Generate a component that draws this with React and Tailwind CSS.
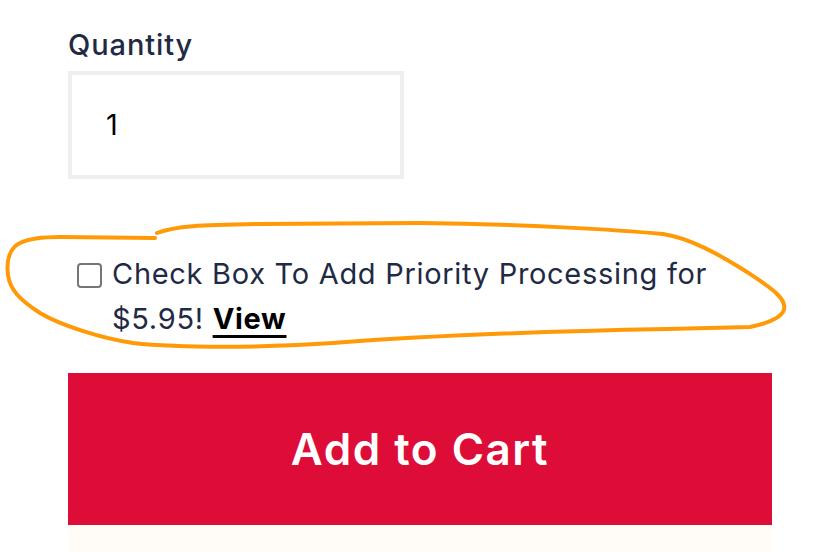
import React, { useState } from 'react';

const Outline = () => (
    <svg
        className="absolute inset-0 pointer-events-none"
        width="814"
        height="552"
        viewBox="0 0 814 552"
        fill="none"
    >
        <path
            d="M157 233 C 175 226, 200 225, 260 224 L 420 223 C 520 224, 620 230, 663 234 C 690 238, 720 255, 747 272 C 770 287, 790 300, 783 312 C 778 320, 760 325, 750 327 L 667 329 C 560 331, 450 334, 333 343 C 260 348, 180 348, 133 343 C 100 338, 60 325, 40 313 C 20 300, 10 290, 8 275 C 6 260, 10 248, 20 243 C 30 238, 45 237, 60 237 L 155 238"
            stroke="#ff9a06"
            strokeWidth="4"
            strokeLinecap="round"
            strokeLinejoin="round"
        />
    </svg>
);

const App = () => {
    const [priority, setPriority] = useState(false);

    return (
        <div className="relative w-[814px] h-[552px] bg-white overflow-hidden font-['Inter',sans-serif]">
            <div className="pl-[68px] pt-[27px] w-[772px]">
                <label className="block text-[29px] leading-[36px] font-medium tracking-[0.9px] text-[#1f2a44]">Quantity</label>

                <div className="mt-[8px] w-[336px] h-[108px] border-4 border-[#efefef] flex items-center pl-[34px] text-[29px] text-black">
                    1
                </div>

                {/* priority processing option */}
                <div className="mt-[72px] flex items-start pl-[9px] gap-[10px]">
                    <button
                        onClick={() => setPriority(!priority)}
                        className="mt-[12px] w-[25px] h-[25px] shrink-0 border-2 border-[#767676] rounded-[4px] bg-white"
                    />
                    <p className="text-[29px] leading-[45px] tracking-[0.7px] text-[#1f2a44]">
                        Check Box To Add Priority Processing for
                        <br />
                        $5.95! <span className="font-bold text-black underline decoration-[3px] underline-offset-[6px]">View</span>
                    </p>
                </div>

                <button className="mt-[32px] w-[704px] h-[152px] bg-[#de0d38] text-white text-[44px] font-semibold tracking-[1.5px]">
                    Add to Cart
                </button>
                <div className="h-[27px] w-[704px] bg-[#fffcf8]" />
            </div>

            <Outline />
        </div>
    );
};

export default App;
